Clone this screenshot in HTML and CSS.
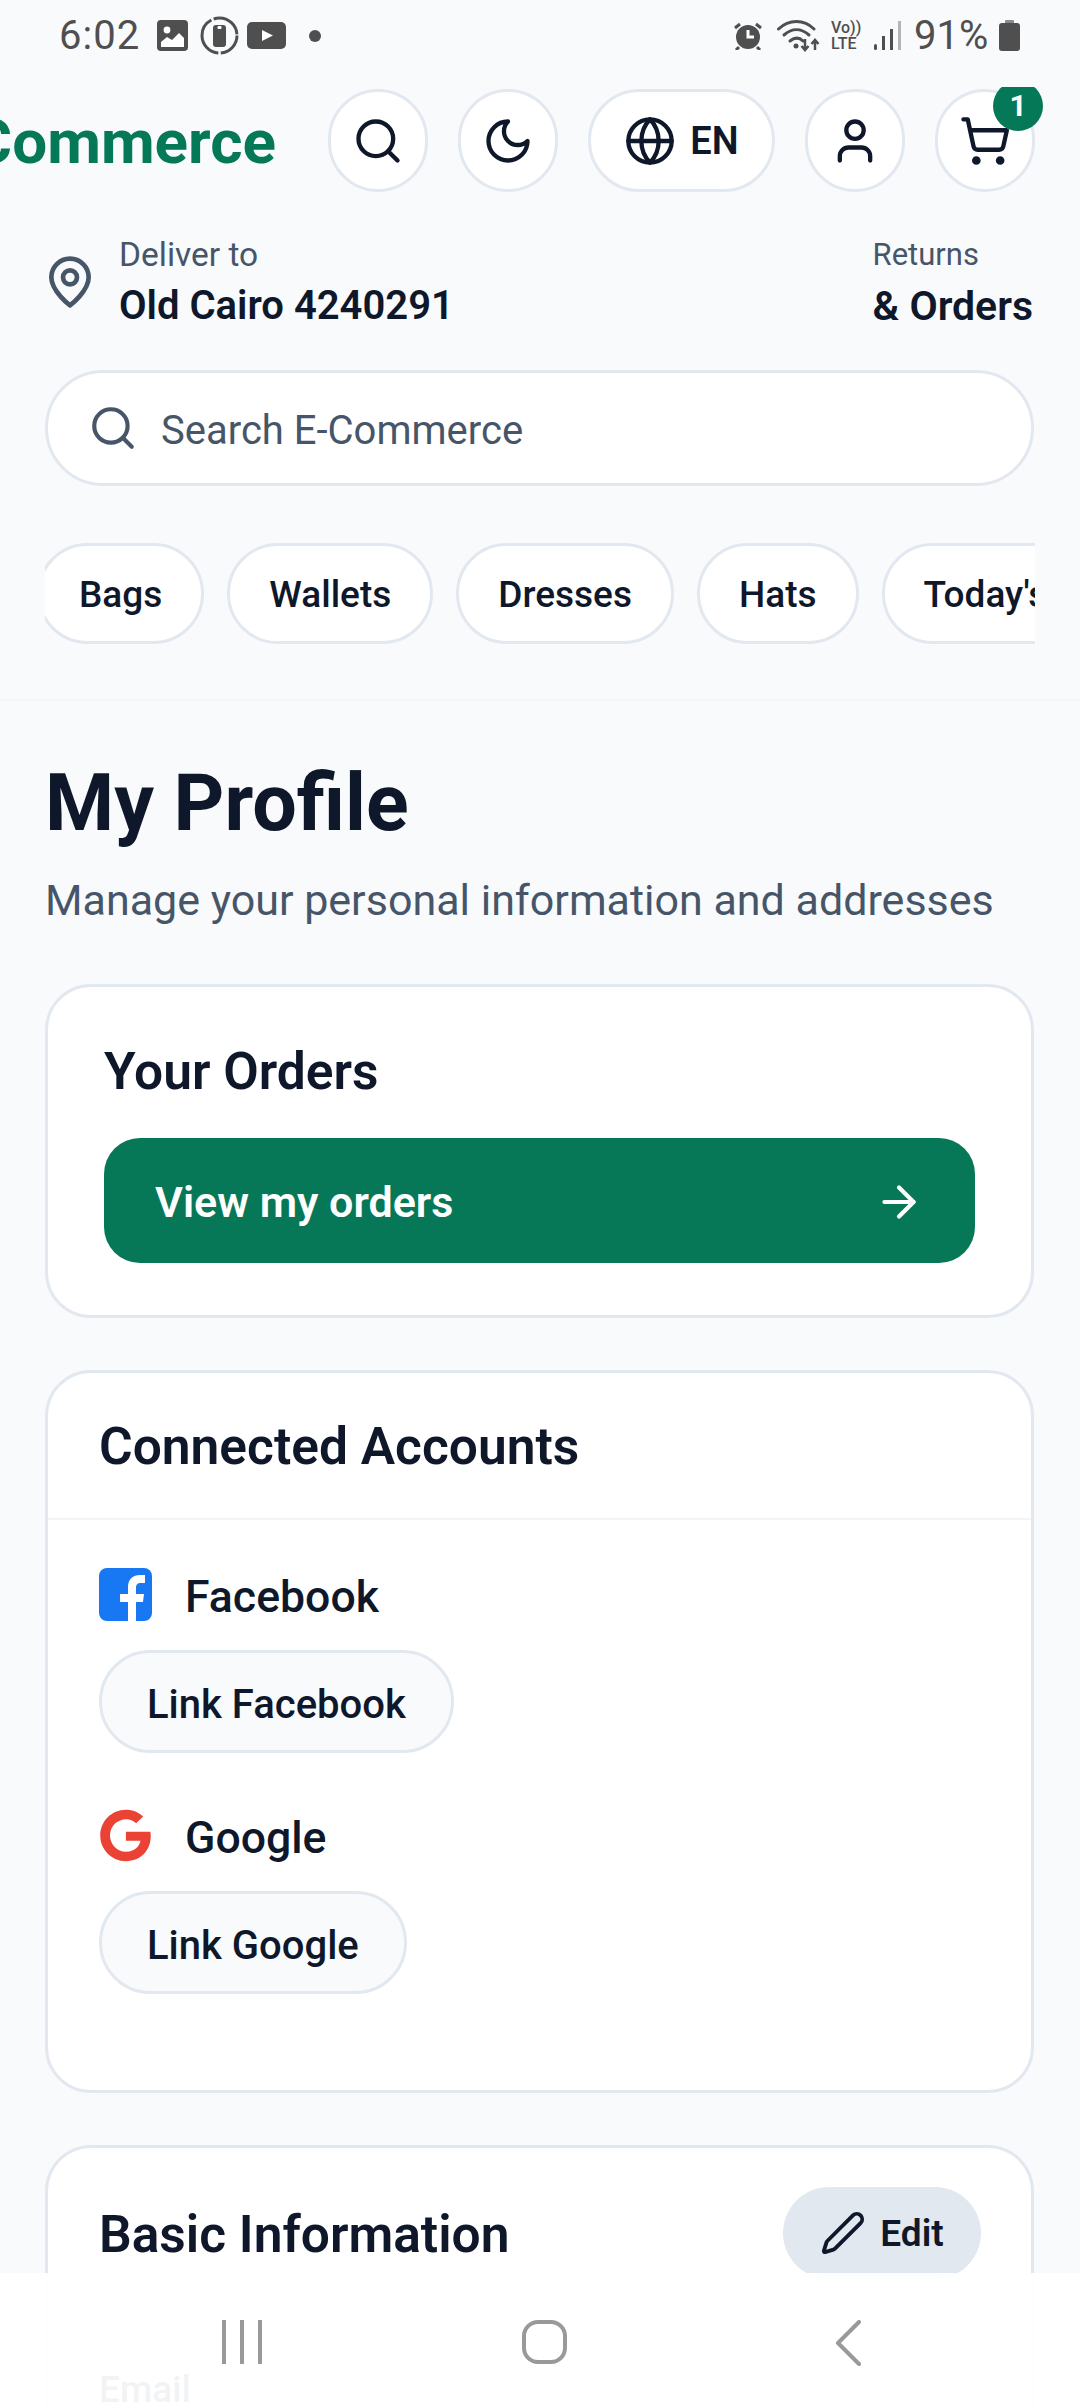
FILE: index.html
```html
<!DOCTYPE html>
<html lang="en">
<head>
    <meta charset="UTF-8">
    <meta name="viewport" content="width=device-width, initial-scale=1.0">
    <title>My Profile</title>
    <link rel="stylesheet" href="styles.css">
</head>
<body>
    <!-- Phone status bar -->
    <div class="status-bar">
        <div class="status-left">
            <span class="status-time">6:02</span>
            <svg class="st-gallery" viewBox="0 0 31 31"><rect width="31" height="31" rx="4" fill="#4f4f4f"/><circle cx="10" cy="10" r="3.4" fill="#fff"/><path d="M4 27v-5l6-5 5 3 7-7 5 5v9z" fill="#fff"/></svg>
            <svg class="st-circle" viewBox="0 0 39 39"><circle cx="19.5" cy="19.5" r="17.5" fill="none" stroke="#4f4f4f" stroke-width="3" stroke-dasharray="26 2.5 45 2.5 32 2"/><rect x="13" y="9" width="13" height="22" rx="3" fill="#4f4f4f"/><rect x="17.500" y="10" width="4" height="3" rx="1" fill="#fff"/></svg>
            <svg class="st-video" viewBox="0 0 39 27"><rect width="39" height="27" rx="5" fill="#4f4f4f"/><path d="M15 8l11 5.500-11 5.500z" fill="#fff"/></svg>
            <span class="st-dot"></span>
        </div>
        <div class="status-right">
            <svg class="st-alarm" viewBox="0 0 28 28"><circle cx="14" cy="15" r="12" fill="#4f4f4f"/><path d="M14 8v7h6" fill="none" stroke="#fff" stroke-width="3"/><path d="M1 6l5-4M27 6l-5-4M5 25l-3 3M23 25l3 3" stroke="#4f4f4f" stroke-width="3"/></svg>
            <svg class="st-wifi" viewBox="0 0 44 34"><g fill="none" stroke="#4f4f4f" stroke-width="3" stroke-linecap="round"><path d="M1.500 10C12 0 27 0 37 10"/><path d="M7 16c8-7 17-7 25 0"/><path d="M13 22c5-4 9-4 13 0"/></g><circle cx="19" cy="27" r="2.500" fill="#4f4f4f"/><path d="M28 20v11M24.500 27l3.500 4 3.500-4M38 31V21M34.500 25l3.500-4 3.500 4" fill="none" stroke="#4f4f4f" stroke-width="2.500"/></svg>
            <span class="st-volte"><span>Vo))</span><span>LTE</span></span>
            <svg class="st-signal" viewBox="0 0 27 29"><rect x="0" y="23" width="3" height="6" rx="1.500" fill="#4f4f4f"/><rect x="8" y="15" width="3" height="14" fill="#4f4f4f"/><rect x="16" y="8" width="3" height="21" fill="#4f4f4f"/><rect x="24" y="0" width="3" height="29" fill="#b5b5b5"/></svg>
            <span class="status-batt">91%</span>
            <svg class="st-battery" viewBox="0 0 21 31"><rect x="6" width="9" height="4" rx="1" fill="#8a8a8a"/><rect y="3" width="21" height="28" rx="3" fill="#4f4f4f"/></svg>
        </div>
    </div>

    <!-- Top header -->
    <div class="topbar">
        <div class="logo">E-Commerce</div>
        <button class="round-btn">
            <svg class="icon" viewBox="0 0 24 24"><circle cx="11" cy="11" r="8"/><path d="m21 21-4.300-4.300"/></svg>
        </button>
        <button class="round-btn">
            <svg class="icon" viewBox="0 0 24 24"><path d="M12 3a6 6 0 0 0 9 9 9 9 0 1 1-9-9Z"/></svg>
        </button>
        <button class="round-btn lang-btn">
            <svg class="icon" viewBox="0 0 24 24"><circle cx="12" cy="12" r="10"/><path d="M12 2a14.500 14.500 0 0 0 0 20 14.500 14.500 0 0 0 0-20"/><path d="M2 12h20"/></svg>
            <span>EN</span>
        </button>
        <button class="round-btn">
            <svg class="icon" viewBox="0 0 24 24"><path d="M19 21v-2a4 4 0 0 0-4-4H9a4 4 0 0 0-4 4v2"/><circle cx="12" cy="7" r="4"/></svg>
        </button>
        <button class="round-btn cart-btn">
            <svg class="icon" viewBox="0 0 24 24"><circle cx="8" cy="21" r="1"/><circle cx="19" cy="21" r="1"/><path d="M2.050 2.050h2l2.660 12.420a2 2 0 0 0 2 1.580h9.780a2 2 0 0 0 1.950-1.570l1.650-7.430H5.120"/></svg>
            <span class="badge">1</span>
        </button>
    </div>

    <div class="deliver-row">
        <div class="deliver">
            <svg class="pin" viewBox="0 0 24 24"><path d="M20 10c0 6-8 12-8 12s-8-6-8-12a8 8 0 0 1 16 0Z"/><circle cx="12" cy="10" r="3"/></svg>
            <div>
                <div class="small-label">Deliver to</div>
                <div class="strong-label">Old Cairo 4240291</div>
            </div>
        </div>
        <div>
            <div class="small-label returns">Returns</div>
            <div class="strong-label orders-label">&amp; Orders</div>
        </div>
    </div>

    <div class="search-box">
        <svg class="search-icon" viewBox="0 0 24 24"><circle cx="11" cy="11" r="8"/><path d="m21 21-4.300-4.300"/></svg>
        <span>Search E-Commerce</span>
    </div>

    <div class="chips">
        <div class="chip first">Bags</div>
        <div class="chip">Wallets</div>
        <div class="chip">Dresses</div>
        <div class="chip">Hats</div>
        <div class="chip">Today's Deals</div>
    </div>

    <!-- Profile content -->
    <div class="content">
        <h1>My Profile</h1>
        <p class="subtitle">Manage your personal information and addresses</p>

        <div class="card orders-card">
            <h2>Your Orders</h2>
            <a class="orders-link">
                <span>View my orders</span>
                <svg class="arrow" viewBox="0 0 24 24"><path d="M5 12h14"/><path d="m12 5 7 7-7 7"/></svg>
            </a>
        </div>

        <div class="card accounts-card">
            <div class="card-head">
                <h2>Connected Accounts</h2>
            </div>
            <div class="accounts">
                <div class="account">
                    <div class="account-name">
                        <svg class="brand" viewBox="0 0 53 53"><rect width="53" height="53" rx="8" fill="#1877f2"/><path d="M29 53V34h-8v-8h8v-7c0-8 5-12 12-12h5v8h-4c-4 0-5 2-5 5v6h8l-1 8h-7v19z" fill="#fff"/></svg>
                        <span>Facebook</span>
                    </div>
                    <button class="link-btn">Link Facebook</button>
                </div>
                <div class="account">
                    <div class="account-name">
                        <svg class="brand" viewBox="0 0 488 512"><path d="M488 261.800C488 403.300 391.100 504 248 504 110.800 504 0 393.200 0 256S110.800 8 248 8c66.800 0 123 24.500 166.300 64.900l-67.500 64.900C258.500 52.600 94.300 116.600 94.300 256c0 86.500 69.100 156.600 153.700 156.600 98.200 0 135-70.400 140.800-106.900H248v-85.300h236.100c2.300 12.700 3.900 24.900 3.900 41.400z" fill="#ea4335"/></svg>
                        <span>Google</span>
                    </div>
                    <button class="link-btn">Link Google</button>
                </div>
            </div>
        </div>

        <div class="card info-card">
            <div class="info-head">
                <h2>Basic Information</h2>
                <button class="edit-btn">
                    <svg class="pencil" viewBox="0 0 24 24"><path d="M21.170 6.810a1 1 0 0 0-3.990-3.990L3.840 16.170a2 2 0 0 0-.5.830l-1.320 4.350a.5.500 0 0 0 .62.620l4.350-1.320a2 2 0 0 0 .83-.5z"/></svg>
                    <span>Edit</span>
                </button>
            </div>
            <div class="field-label">Email</div>
        </div>
    </div>

    <!-- Android navigation bar, sits over the page -->
    <div class="nav-bar">
        <svg class="nav-recent" viewBox="0 0 42 44"><path d="M3 1v42M21 1v42M39 1v42"/></svg>
        <svg class="nav-home" viewBox="0 0 45 44"><rect x="2" y="2" width="41" height="40" rx="14"/></svg>
        <svg class="nav-back" viewBox="0 0 26 46"><path d="M24 2 3 23l21 21"/></svg>
    </div>
</body>
</html>
```

FILE: styles.css
```css
* {
    box-sizing: border-box;
}
body {
    margin: 0;
    width: 1080px;
    height: 2408px;
    overflow: hidden;
    position: relative;
    font-family: Roboto, "Noto Sans", sans-serif;
    background-color: #f8fafc;
    color: #0f172a;
}
h1, h2, p {
    margin: 0;
}
button {
    font-family: inherit;
    color: inherit;
}

/* status bar */
.status-bar {
    height: 87px;
    display: flex;
    justify-content: space-between;
    align-items: flex-start;
    padding: 16px 60px 0 59px;
    color: #4f4f4f;
}
.status-left, .status-right {
    display: flex;
    align-items: center;
    height: 39px;
}
.status-time {
    font-size: 40px;
    letter-spacing: 1px;
    width: 98px;
}
.st-gallery { width: 31px; height: 31px; }
.st-circle { width: 39px; height: 39px; margin-left: 12px; }
.st-video { width: 39px; height: 27px; margin-left: 8px; }
.st-dot {
    width: 12px;
    height: 12px;
    margin-left: 23px;
    border-radius: 50%;
    background-color: #4f4f4f;
}
.st-alarm { width: 28px; height: 28px; }
.st-wifi { width: 44px; height: 34px; margin-left: 15px; }
.st-volte {
    display: flex;
    flex-direction: column;
    width: 30px;
    margin-left: 10px;
    font-size: 16px;
    line-height: 16px;
    font-weight: 500;
}
.st-signal { width: 27px; height: 29px; margin-left: 13px; }
.status-batt {
    font-size: 40px;
    margin-left: 13px;
    width: 76px;
    white-space: nowrap;
}
.st-battery { width: 21px; height: 31px; margin-left: 9px; }

/* header */
.topbar {
    height: 105px;
    display: flex;
    justify-content: flex-end;
    align-items: flex-start;
    gap: 30px;
    padding: 2px 45px 0 0;
    overflow: hidden;
}
.logo {
    flex-shrink: 0;
    margin: 3px 22px 0 0;
    font-size: 62px;
    line-height: 100px;
    font-weight: 700;
    color: #047857;
    white-space: nowrap;
}
.round-btn {
    flex-shrink: 0;
    position: relative;
    width: 100px;
    height: 103px;
    padding: 0;
    display: flex;
    align-items: center;
    justify-content: center;
    background-color: #fff;
    border: 3px solid #e2e8f0;
    border-radius: 52px;
}
.icon {
    width: 52px;
    height: 52px;
    fill: none;
    stroke: #0f172a;
    stroke-width: 2;
    stroke-linecap: round;
    stroke-linejoin: round;
}
.lang-btn {
    width: 187px;
    gap: 14px;
    font-size: 38px;
    font-weight: 600;
}
.badge {
    position: absolute;
    top: -11px;
    right: -11px;
    width: 50px;
    height: 50px;
    border-radius: 50%;
    background-color: #047857;
    color: #fff;
    font-size: 30px;
    font-weight: 700;
    line-height: 50px;
    text-align: center;
}

/* deliver row */
.deliver-row {
    display: flex;
    justify-content: space-between;
    padding: 41px 47px 0 49px;
}
.deliver {
    display: flex;
    align-items: center;
    gap: 21px;
}
.pin {
    width: 56px;
    height: 56px;
    margin-left: -7px;
    fill: none;
    stroke: #475569;
    stroke-width: 2;
    stroke-linecap: round;
    stroke-linejoin: round;
}
.small-label {
    font-size: 33.500px;
    line-height: 44px;
    color: #475569;
}
.small-label.returns {
    font-size: 31px;
}
.strong-label {
    margin-top: 4px;
    font-size: 40px;
    line-height: 50px;
    font-weight: 600;
}
.strong-label.orders-label {
    font-size: 41px;
}

/* search */
.search-box {
    display: flex;
    align-items: center;
    gap: 23px;
    height: 116px;
    margin: 39px 46px 0 45px;
    padding-left: 40px;
    background-color: #fff;
    border: 3px solid #e2e8f0;
    border-radius: 58px;
    font-size: 40px;
    color: #475569;
}
.search-box span {
    margin-top: 4px;
}
.search-icon {
    width: 50px;
    height: 50px;
    fill: none;
    stroke: #475569;
    stroke-width: 2;
    stroke-linecap: round;
    stroke-linejoin: round;
}

/* category chips */
.chips {
    display: flex;
    gap: 23px;
    margin: 57px 45px 0 45px;
    overflow: hidden;
}
.chip {
    flex-shrink: 0;
    height: 101px;
    padding: 2px 39px 0 39px;
    display: flex;
    align-items: center;
    background-color: #fff;
    border: 3px solid #e2e8f0;
    border-radius: 51px;
    font-size: 37px;
    font-weight: 500;
    white-space: nowrap;
}
.chip.first {
    margin-left: -8px;
}

/* page content */
.content {
    margin-top: 55px;
    padding: 55px 46px 0 45px;
    border-top: 2px solid #f1f5f9;
}
h1 {
    font-size: 79px;
    line-height: 94px;
    font-weight: 700;
}
.subtitle {
    margin-top: 25px;
    font-size: 43px;
    line-height: 50px;
    color: #475569;
}
.card {
    margin-top: 52px;
    background-color: #fff;
    border: 3px solid #e2e8f0;
    border-radius: 46px;
}
h2 {
    font-size: 51.500px;
    line-height: 60px;
    font-weight: 600;
}
.orders-card {
    height: 334px;
    margin-top: 59px;
    padding: 55px 56px 0 56px;
}
.orders-link {
    height: 125px;
    margin-top: 36px;
    padding: 0 56px 0 51px;
    display: flex;
    align-items: center;
    justify-content: space-between;
    background-color: #077857;
    border-radius: 36px;
    color: #fff;
    font-size: 43px;
    font-weight: 600;
}
.orders-link span {
    margin-top: 2px;
}
.arrow {
    width: 50px;
    height: 50px;
    margin: 2px -5px 0 0;
    fill: none;
    stroke: #fff;
    stroke-width: 2;
    stroke-linecap: round;
    stroke-linejoin: round;
}
.accounts-card {
    height: 723px;
}
.card-head {
    height: 147px;
    padding: 44px 51px 0 51px;
    border-bottom: 2px solid #f1f5f9;
}
.accounts {
    padding: 48px 51px 0 51px;
}
.account + .account {
    margin-top: 56px;
}
.account-name {
    display: flex;
    align-items: center;
    height: 53px;
    gap: 33px;
    font-size: 44.600px;
    font-weight: 500;
}
.account-name span {
    margin-top: 4px;
}
.brand {
    width: 53px;
    height: 53px;
}
.link-btn {
    display: block;
    height: 103px;
    margin-top: 29px;
    padding: 5px 45px 0 45px;
    background-color: #f8fafc;
    border: 3px solid #e2e8f0;
    border-radius: 52px;
    font-size: 40px;
    font-weight: 500;
}
.info-card {
    height: 265px;
    border-bottom: none;
    border-radius: 46px 46px 0 0;
}
.info-head {
    display: flex;
    justify-content: space-between;
    align-items: center;
    padding: 39px 50px 0 51px;
}
.info-head h2 {
    margin-top: 3px;
}
.edit-btn {
    height: 92px;
    width: 198px;
    padding: 0;
    display: flex;
    align-items: center;
    justify-content: center;
    gap: 14px;
    background-color: #e2e8f0;
    border: none;
    border-radius: 46px;
    font-size: 37px;
    font-weight: 600;
}
.pencil {
    width: 46px;
    height: 46px;
    fill: none;
    stroke: #0f172a;
    stroke-width: 2;
    stroke-linecap: round;
    stroke-linejoin: round;
}
.field-label {
    margin: 89px 0 0 51px;
    font-size: 37px;
    font-weight: 500;
    color: #475569;
}

/* android nav bar */
.nav-bar {
    position: absolute;
    left: 0;
    right: 0;
    bottom: 0;
    height: 135px;
    display: grid;
    grid-template-columns: repeat(3, 303px);
    justify-items: center;
    align-items: start;
    padding: 47px 0 0 90px;
    background-color: rgba(255, 255, 255, 0.93);
}
.nav-bar svg {
    fill: none;
    stroke: #999;
    stroke-width: 4;
    stroke-linecap: round;
    stroke-linejoin: round;
}
.nav-recent { width: 42px; height: 44px; }
.nav-home { width: 45px; height: 44px; }
.nav-back { width: 26px; height: 46px; }
```
